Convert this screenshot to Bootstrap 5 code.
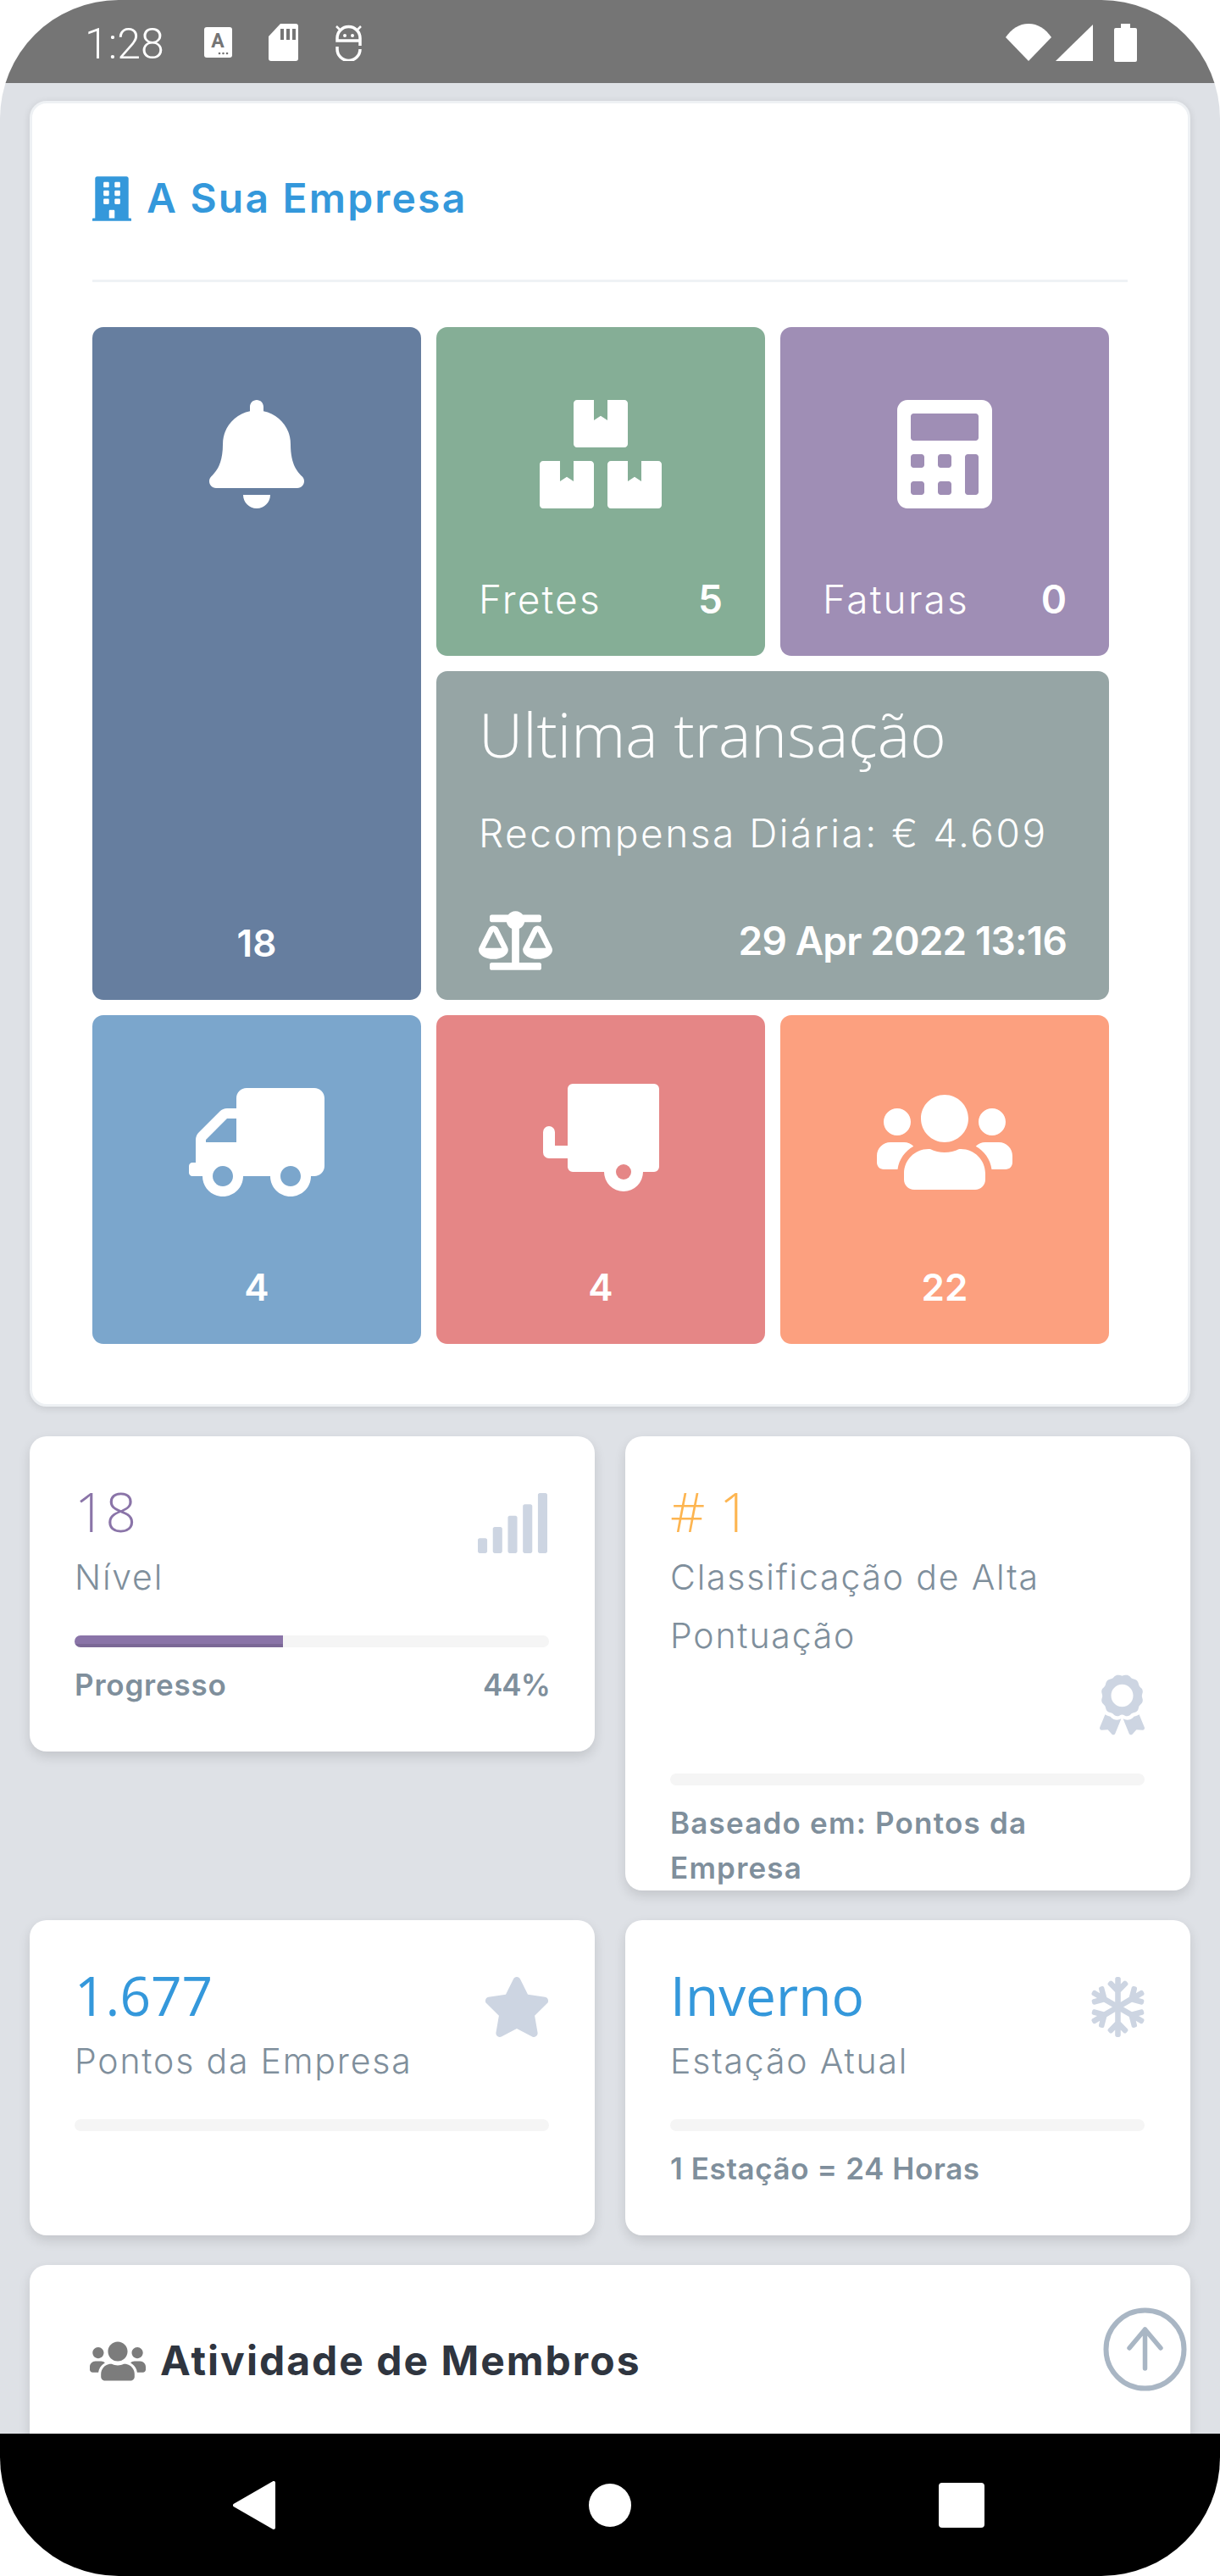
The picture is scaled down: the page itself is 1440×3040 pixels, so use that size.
<!DOCTYPE html>
<html lang="pt">
<head>
<meta charset="utf-8">
<title>A Sua Empresa</title>
<link href="https://cdn.jsdelivr.net/npm/bootstrap@5.3.0/dist/css/bootstrap.min.css" rel="stylesheet">
<style>
body{background:#fff;font-family:"Inter","Liberation Sans",sans-serif;margin:0}
.phone{width:1440px;height:3040px;border-radius:140px;overflow:hidden}
.statusbar{height:98px;background:#757575;color:#fff;padding:2px 98px 0 100px;flex:none}
.clock{font:300 50px/1 "Roboto",sans-serif;margin-right:47px;margin-top:3px}
.st-a{width:33px;height:36px;margin-right:43px}
.st-sd{width:35px;height:44px;margin-right:44px}
.st-bot{width:31px;height:44px}
.st-wifi{width:54px;height:44px;margin-right:5px}
.st-sig{width:44px;height:44px;margin-right:25px}
.st-bat{width:27px;height:45px}
.screen{flex:1;background:#dee1e6;padding:21px 35px 0;overflow:hidden;min-height:0}
.navbar-bottom{height:168px;background:#000;flex:none;padding-left:275px}
.nav-back{width:50px;height:57px;margin-right:370px}
.nav-home{width:50px;height:51px;margin-right:363px}
.nav-recent{width:54px;height:53px}
.main-card{border:3px solid #eef1f4;border-radius:20px;background:#fff;padding:85px 71px 71px;margin-bottom:35px;box-shadow:0 2px 10px rgba(0,0,0,.11)}
.main-title{height:54px;margin-bottom:69px;color:#3498db;font-size:48px;font-weight:600;letter-spacing:2.2px;gap:18px}
.main-title svg{width:46px;height:53px;fill:#3498db}
.title-rule{height:3px;background:#eff2f5;margin-bottom:53px}
.tiles{display:grid;grid-template-columns:repeat(3,388px);grid-auto-rows:388px;gap:18px 18px;width:1200px}
.tile{border-radius:13px;color:#fff;display:flex;flex-direction:column;padding:0 50px 37px}
.tile-tall{grid-row:span 2}
.tile-wide{grid-column:span 2;padding-top:29px;padding-bottom:35px}
.bg-slate{background:#667e9f}.bg-sage{background:#85ae96}.bg-lilac{background:#9f8eb5}.bg-ash{background:#96a5a5}.bg-sky{background:#7ba6cc}.bg-rose{background:#e58686}.bg-peach{background:#fca07f}
.tile-icon{height:128px;margin-top:86px;fill:#fff;align-self:center;display:block}
.tile-icon-raised{margin-top:81px}
.tile-foot{margin-top:auto;line-height:60px;font-size:46px;font-weight:300;letter-spacing:2.2px}
.tile-foot b{font-weight:600;letter-spacing:0}
.tile-count{margin-top:auto;line-height:60px;font-size:44px;font-weight:600;text-align:center}
.last-head{font:300 72.5px/90px "Open Sans",sans-serif}
.last-sub{font-size:46px;font-weight:300;line-height:60px;margin-top:42px;letter-spacing:2.5px;white-space:nowrap}
.last-foot{margin-top:auto}
.last-foot svg{width:87px;height:70px;fill:#fff}
.last-foot span{font-size:46px;font-weight:600;letter-spacing:-.85px}
.stat-row{--bs-gutter-x:36px;--bs-gutter-y:0;margin-bottom:35px}
.stat-card{background:#fff;border-radius:20px;padding:51px 54px 0 53px;height:372px;box-shadow:0 6px 14px rgba(0,0,0,.12);overflow:hidden}
.stat-tall{height:536px}
.stat-head{margin-bottom:34px}
.stat-num{font:300 64px/76px "Open Sans",sans-serif}
.stat-label{font-size:41px;font-weight:300;line-height:69px;color:#7f8f9c;margin-top:5px;letter-spacing:1.8px}
.c-purple{color:#8a74a8}.c-amber{color:#fdb551}.c-blue{color:#3498db;font-weight:400}
.stat-ico{fill:#cdd5e2;margin-left:auto;margin-top:16px;display:block}
.ico-sig{width:82px;height:71px;margin-right:2px}
.ico-star{width:80px;height:71px;margin-right:-2px}
.ico-snow{width:63px;height:71px}
.ico-award{width:53px;height:72px;margin-top:11px;margin-bottom:11px}
.stat-track{--bs-progress-height:14px;--bs-progress-bg:#f5f5f5;--bs-progress-border-radius:7px;--bs-progress-bar-bg:#8a74a8}
.stat-fill{box-shadow:inset 0 -4px 0 rgba(0,0,0,.1)}
.stat-foot{font-size:35px;font-weight:600;line-height:53px;color:#7f8f9c;margin-top:18px;letter-spacing:.8px}
.stat-foot .foot-end{letter-spacing:-.9px;margin-right:-1px}
.foot-long{letter-spacing:1.2px}
.foot-short{letter-spacing:.6px}
.member-card{background:#fff;border-radius:20px;height:400px;padding:77px 70px 0 71px;box-shadow:0 6px 14px rgba(0,0,0,.12)}
.member-title{gap:17px;font-size:48px;font-weight:700;color:#2f353f;letter-spacing:2px}
.member-title svg{width:66px;height:53px;fill:#7c7c7c}
.up-btn{right:39px;bottom:218px;width:99px;height:99px}
</style>
</head>
<body>
<div class="phone d-flex flex-column position-relative">

  <div class="statusbar d-flex align-items-center">
    <span class="clock">1:28</span>
    <svg class="st-a" viewBox="0 0 33 36"><rect width="33" height="36" rx="3" fill="#fff"/><text x="16" y="24" text-anchor="middle" font-family="Roboto,sans-serif" font-weight="700" font-size="23" fill="#757575">A</text><circle cx="18" cy="31" r="1.3" fill="#757575"/><circle cx="22.500" cy="31" r="1.3" fill="#757575"/><circle cx="27" cy="31" r="1.3" fill="#757575"/></svg>
    <svg class="st-sd" viewBox="0 0 35 44"><path fill="#fff" d="M14 0h18a3 3 0 0 1 3 3v38a3 3 0 0 1-3 3H3a3 3 0 0 1-3-3V15z"/><path fill="#757575" d="M14 6h4v13h-4zM21 6h4v13h-4zM28 6h4v13h-4z"/></svg>
    <svg class="st-bot" viewBox="0 0 31 44" fill="none" stroke="#fff" stroke-width="3.500"><path d="M29 26V17a13.500 13.500 0 0 0-27 0v3h27M2 27v3a13.500 13.500 0 0 0 27 0"/><path d="M1 3l5 5M30 3l-5 5" stroke-width="2.500"/><circle cx="11" cy="14" r="2" fill="#fff" stroke="none"/><circle cx="20" cy="14" r="2" fill="#fff" stroke="none"/></svg>
    <div class="ms-auto d-flex align-items-center">
      <svg class="st-wifi" viewBox="0 0 54 44"><path fill="#fff" d="M0 16C7 6 16 0 27 0s20 6 27 16L27 44z"/></svg>
      <svg class="st-sig" viewBox="0 0 44 44"><path fill="#fff" d="M44 1v43H0z"/></svg>
      <svg class="st-bat" viewBox="0 0 27 45"><path fill="#fff" d="M8 0h11v5h6a2 2 0 0 1 2 2v36a2 2 0 0 1-2 2H2a2 2 0 0 1-2-2V7a2 2 0 0 1 2-2h6z"/></svg>
    </div>
  </div>

  <div class="screen">
    <section class="main-card">
      <div class="main-title d-flex align-items-center">
        <svg viewBox="0 0 448 512"><path d="M436 480h-20V24c0-13.255-10.745-24-24-24H56C42.745 0 32 10.745 32 24v456H12c-6.627 0-12 5.373-12 12v20h448v-20c0-6.627-5.373-12-12-12zM128 76c0-6.627 5.373-12 12-12h40c6.627 0 12 5.373 12 12v40c0 6.627-5.373 12-12 12h-40c-6.627 0-12-5.373-12-12V76zm0 96c0-6.627 5.373-12 12-12h40c6.627 0 12 5.373 12 12v40c0 6.627-5.373 12-12 12h-40c-6.627 0-12-5.373-12-12v-40zm52 148h-40c-6.627 0-12-5.373-12-12v-40c0-6.627 5.373-12 12-12h40c6.627 0 12 5.373 12 12v40c0 6.627-5.373 12-12 12zm76 160h-64v-84c0-6.627 5.373-12 12-12h40c6.627 0 12 5.373 12 12v84zm64-172c0 6.627-5.373 12-12 12h-40c-6.627 0-12-5.373-12-12v-40c0-6.627 5.373-12 12-12h40c6.627 0 12 5.373 12 12v40zm0-96c0 6.627-5.373 12-12 12h-40c-6.627 0-12-5.373-12-12v-40c0-6.627 5.373-12 12-12h40c6.627 0 12 5.373 12 12v40zm0-96c0 6.627-5.373 12-12 12h-40c-6.627 0-12-5.373-12-12V76c0-6.627 5.373-12 12-12h40c6.627 0 12 5.373 12 12v40z"/></svg>
        <span>A Sua Empresa</span>
      </div>
      <div class="title-rule"></div>
      <div class="tiles">
        <div class="tile tile-tall bg-slate">
          <svg class="tile-icon" viewBox="0 0 448 512"><path d="M224 512c35.32 0 63.97-28.65 63.97-64H160.03c0 35.35 28.65 64 63.97 64zm215.39-149.71c-19.32-20.76-55.47-51.99-55.47-154.29 0-77.7-54.48-139.9-127.94-155.16V32c0-17.67-14.32-32-31.98-32s-31.98 14.33-31.98 32v20.84C118.56 68.1 64.08 130.3 64.08 208c0 102.3-36.15 133.53-55.47 154.29-6 6.45-8.66 14.16-8.61 21.71.11 16.4 12.98 32 32.1 32h383.8c19.12 0 32-15.6 32.1-32 .05-7.55-2.61-15.27-8.61-21.71z"/></svg>
          <div class="tile-count">18</div>
        </div>
        <div class="tile bg-sage">
          <svg class="tile-icon" viewBox="0 0 576 512"><path d="M560 288h-80v96l-32-21.3-32 21.3v-96h-80c-8.8 0-16 7.2-16 16v192c0 8.8 7.2 16 16 16h224c8.8 0 16-7.2 16-16V304c0-8.8-7.2-16-16-16zm-384-64h224c8.8 0 16-7.2 16-16V16c0-8.8-7.2-16-16-16h-80v96l-32-21.3L256 96V0h-80c-8.8 0-16 7.2-16 16v192c0 8.8 7.2 16 16 16zm64 64h-80v96l-32-21.3L96 384v-96H16c-8.8 0-16 7.2-16 16v192c0 8.8 7.2 16 16 16h224c8.8 0 16-7.2 16-16V304c0-8.8-7.2-16-16-16z"/></svg>
          <div class="tile-foot d-flex justify-content-between"><span>Fretes</span><b>5</b></div>
        </div>
        <div class="tile bg-lilac">
          <svg class="tile-icon" viewBox="0 0 448 512"><path d="M400 0H48C22.4 0 0 22.4 0 48v416c0 25.6 22.4 48 48 48h352c25.6 0 48-22.4 48-48V48c0-25.6-22.4-48-48-48zM128 435.2c0 6.4-6.4 12.8-12.8 12.8H76.8c-6.4 0-12.8-6.4-12.8-12.8v-38.4c0-6.4 6.4-12.8 12.8-12.8h38.4c6.4 0 12.8 6.4 12.8 12.8v38.4zm0-128c0 6.4-6.4 12.8-12.8 12.8H76.8c-6.4 0-12.8-6.4-12.8-12.8v-38.4c0-6.4 6.4-12.8 12.8-12.8h38.4c6.4 0 12.8 6.4 12.8 12.8v38.4zm128 128c0 6.4-6.4 12.8-12.8 12.8h-38.4c-6.4 0-12.8-6.4-12.8-12.8v-38.4c0-6.4 6.4-12.8 12.8-12.8h38.4c6.4 0 12.8 6.4 12.8 12.8v38.4zm0-128c0 6.4-6.4 12.8-12.8 12.8h-38.4c-6.4 0-12.8-6.4-12.8-12.8v-38.4c0-6.4 6.4-12.8 12.8-12.8h38.4c6.4 0 12.8 6.4 12.8 12.8v38.4zm128 128c0 6.4-6.4 12.8-12.8 12.8h-38.4c-6.4 0-12.8-6.4-12.8-12.8V268.8c0-6.4 6.4-12.8 12.8-12.8h38.4c6.4 0 12.8 6.4 12.8 12.8v166.4zm0-256c0 6.4-6.4 12.8-12.8 12.8H76.8c-6.4 0-12.8-6.4-12.8-12.8V76.8C64 70.4 70.4 64 76.8 64h294.4c6.4 0 12.8 6.4 12.8 12.8v102.4z"/></svg>
          <div class="tile-foot d-flex justify-content-between"><span>Faturas</span><b>0</b></div>
        </div>
        <div class="tile tile-wide bg-ash">
          <div class="last-head">Ultima transação</div>
          <div class="last-sub">Recompensa Diária: € 4.609</div>
          <div class="last-foot d-flex justify-content-between align-items-center">
            <svg viewBox="0 0 640 512"><path d="M256 336h-.02c0-16.18 1.34-8.73-85.05-181.51-17.65-35.29-68.19-35.36-85.87 0C-2.06 328.75.02 320.33.02 336H0c0 44.18 57.31 80 128 80s128-35.82 128-80zM128 176l72 144H56l72-144zm511.98 160c0-16.18 1.34-8.73-85.05-181.51-17.65-35.29-68.19-35.36-85.87 0-87.12 174.26-85.04 165.84-85.04 181.51H384c0 44.18 57.31 80 128 80s128-35.82 128-80h-.02zM440 320l72-144 72 144H440zm88 128H352V153.25c23.51-10.29 41.16-31.48 46.39-57.25H528c8.84 0 16-7.16 16-16V48c0-8.84-7.16-16-16-16H383.64C369.04 12.68 346.09 0 320 0s-49.04 12.68-63.64 32H112c-8.84 0-16 7.16-16 16v32c0 8.84 7.16 16 16 16h129.61c5.23 25.76 22.87 46.96 46.39 57.25V448H112c-8.84 0-16 7.16-16 16v32c0 8.84 7.16 16 16 16h416c8.84 0 16-7.16 16-16v-32c0-8.84-7.16-16-16-16z"/></svg>
            <span>29 Apr 2022 13:16</span>
          </div>
        </div>
        <div class="tile bg-sky">
          <svg class="tile-icon" viewBox="0 0 640 512"><path transform="matrix(-1 0 0 1 640 0)" d="M624 352h-16V243.9c0-12.7-5.1-24.9-14.1-33.9L494 110.1c-9-9-21.2-14.1-33.900-14.1H416V48c0-26.500-21.500-48-48-48H48C21.500 0 0 21.500 0 48v320c0 26.500 21.500 48 48 48h16c0 53 43 96 96 96s96-43 96-96h128c0 53 43 96 96 96s96-43 96-96h48c8.800 0 16-7.200 16-16v-32c0-8.800-7.200-16-16-16zM160 464c-26.500 0-48-21.500-48-48s21.500-48 48-48 48 21.500 48 48-21.500 48-48 48zm320 0c-26.500 0-48-21.500-48-48s21.500-48 48-48 48 21.500 48 48-21.500 48-48 48zm80-208H416V144h44.100l99.900 99.900V256z"/></svg>
          <div class="tile-count">4</div>
        </div>
        <div class="tile bg-rose">
          <svg class="tile-icon tile-icon-raised" viewBox="0 0 137 128"><path d="M35 0h96a6 6 0 0 1 6 6v92a6 6 0 0 1-6 6h-13a23 23 0 0 1-46 0H35a6 6 0 0 1-6-6V88H7a7 7 0 0 1-7-7V57a7 7 0 0 1 14 0v16h15V6a6 6 0 0 1 6-6z"/><circle cx="95" cy="104" r="9" fill="#e58686"/></svg>
          <div class="tile-count">4</div>
        </div>
        <div class="tile bg-peach">
          <svg class="tile-icon" viewBox="0 0 640 512"><path d="M96 224c35.300 0 64-28.700 64-64s-28.700-64-64-64-64 28.700-64 64 28.700 64 64 64zm448 0c35.300 0 64-28.700 64-64s-28.700-64-64-64-64 28.700-64 64 28.700 64 64 64zm32 32h-64c-17.600 0-33.500 7.100-45.100 18.600 40.300 22.100 68.900 62 75.100 109.400h66c17.700 0 32-14.300 32-32v-32c0-35.300-28.700-64-64-64zm-256 0c61.900 0 112-50.100 112-112S381.900 32 320 32 208 82.100 208 144s50.100 112 112 112zm76.800 32h-8.300c-20.800 10-43.900 16-68.500 16s-47.600-6-68.500-16h-8.300C179.600 288 128 339.600 128 403.200V432c0 26.500 21.500 48 48 48h288c26.500 0 48-21.500 48-48v-28.800c0-63.600-51.600-115.200-115.200-115.200zm-223.700-13.400C161.500 263.100 145.600 256 128 256H64c-35.300 0-64 28.700-64 64v32c0 17.700 14.300 32 32 32h65.900c6.300-47.400 34.900-87.300 75.200-109.400z"/></svg>
          <div class="tile-count">22</div>
        </div>
      </div>
    </section>

    <div class="row stat-row align-items-start">
      <div class="col-6">
        <div class="stat-card">
          <div class="stat-head d-flex flex-wrap">
            <div>
              <div class="stat-num c-purple">18</div>
              <div class="stat-label">Nível</div>
            </div>
            <svg class="stat-ico ico-sig" viewBox="24 0 592 512"><path d="M216 288h-48c-8.840 0-16 7.160-16 16v192c0 8.840 7.160 16 16 16h48c8.840 0 16-7.160 16-16V304c0-8.840-7.160-16-16-16zM88 384H40c-8.840 0-16 7.160-16 16v96c0 8.840 7.160 16 16 16h48c8.840 0 16-7.160 16-16v-96c0-8.840-7.160-16-16-16zm256-192h-48c-8.840 0-16 7.160-16 16v288c0 8.840 7.160 16 16 16h48c8.840 0 16-7.160 16-16V208c0-8.840-7.160-16-16-16zm128-96h-48c-8.840 0-16 7.160-16 16v384c0 8.840 7.160 16 16 16h48c8.840 0 16-7.160 16-16V112c0-8.840-7.160-16-16-16zM600 0h-48c-8.840 0-16 7.160-16 16v480c0 8.840 7.160 16 16 16h48c8.840 0 16-7.160 16-16V16c0-8.840-7.160-16-16-16z"/></svg>
          </div>
          <div class="progress stat-track"><div class="progress-bar stat-fill" style="width:44%"></div></div>
          <div class="stat-foot d-flex justify-content-between"><span>Progresso</span><span class="foot-end">44%</span></div>
        </div>
      </div>
      <div class="col-6">
        <div class="stat-card stat-tall">
          <div class="stat-head d-flex flex-wrap">
            <div>
              <div class="stat-num c-amber"># 1</div>
              <div class="stat-label">Classificação de Alta Pontuação</div>
            </div>
            <svg class="stat-ico ico-award" viewBox="0 0 384 512"><path d="M97.120 362.630c-8.690-8.690-4.160-6.240-25.120-11.850-9.510-2.550-17.870-7.450-25.430-13.320L1.200 448.700c-4.390 10.770 3.810 22.470 15.430 22.030l52.690-2.010L105.560 507c8 8.440 22.040 5.810 26.430-4.960l52.050-127.620c-10.840 6.040-22.870 9.580-35.310 9.580-19.500 0-37.820-7.590-51.610-21.370zM382.800 448.700l-45.370-111.240c-7.560 5.880-15.920 10.770-25.430 13.320-21.070 5.640-16.450 3.180-25.120 11.850-13.790 13.780-32.120 21.370-51.620 21.370-12.440 0-24.470-3.550-35.310-9.580L252 502.040c4.390 10.770 18.440 13.400 26.430 4.960l36.250-38.280 52.690 2.010c11.620.44 19.820-11.270 15.430-22.030zM263 340c15.280-15.550 17.030-14.210 38.790-20.140 13.890-3.790 24.750-14.840 28.470-28.980 7.480-28.400 5.540-24.970 25.950-45.750 10.170-10.350 14.140-25.440 10.420-39.580-7.470-28.380-7.480-24.420 0-52.830 3.720-14.140-.25-29.230-10.420-39.580-20.410-20.780-18.470-17.360-25.950-45.750-3.720-14.140-14.580-25.190-28.470-28.980-27.880-7.610-24.520-5.620-44.950-26.410-10.170-10.350-25-14.400-38.890-10.610-27.870 7.600-23.980 7.610-51.900 0-13.890-3.790-28.720.25-38.890 10.610-20.410 20.780-17.050 18.800-44.940 26.410-13.890 3.790-24.750 14.840-28.470 28.980-7.470 28.390-5.540 24.970-25.950 45.750-10.170 10.350-14.150 25.440-10.420 39.580 7.470 28.360 7.480 24.400 0 52.820-3.720 14.140.25 29.230 10.420 39.590 20.410 20.780 18.470 17.350 25.950 45.750 3.720 14.140 14.580 25.190 28.470 28.980C104.600 325.960 106.270 325 121 340c13.230 13.470 33.840 15.880 49.740 5.820a39.676 39.676 0 0 1 42.530 0c15.890 10.060 36.500 7.650 49.730-5.820zM97.660 175.960c0-53.030 42.240-96.020 94.340-96.020s94.340 42.990 94.340 96.020-42.240 96.020-94.340 96.020-94.340-42.990-94.340-96.020z"/></svg>
          </div>
          <div class="progress stat-track"><div class="progress-bar stat-fill" style="width:0%"></div></div>
          <div class="stat-foot foot-long">Baseado em: Pontos da<br>Empresa</div>
        </div>
      </div>
    </div>

    <div class="row stat-row align-items-start">
      <div class="col-6">
        <div class="stat-card">
          <div class="stat-head d-flex flex-wrap">
            <div>
              <div class="stat-num c-blue">1.677</div>
              <div class="stat-label">Pontos da Empresa</div>
            </div>
            <svg class="stat-ico ico-star" viewBox="0 0 576 512"><path d="M259.300 17.800L194 150.200 47.900 171.500c-26.200 3.800-36.700 36.100-17.700 54.600l105.700 103-25 145.500c-4.500 26.300 23.200 46 46.400 33.700L288 439.600l130.700 68.700c23.200 12.200 50.900-7.400 46.400-33.700l-25-145.500 105.700-103c19-18.500 8.500-50.800-17.700-54.600L382 150.200 316.700 17.800c-11.700-23.600-45.600-24.100-57.400 0z"/></svg>
          </div>
          <div class="progress stat-track"><div class="progress-bar stat-fill" style="width:0%"></div></div>
        </div>
      </div>
      <div class="col-6">
        <div class="stat-card">
          <div class="stat-head d-flex flex-wrap">
            <div>
              <div class="stat-num c-blue">Inverno</div>
              <div class="stat-label">Estação Atual</div>
            </div>
            <svg class="stat-ico ico-snow" viewBox="0 0 448 512"><path d="M440.100 355.200l-39.200-23 34.100-9.300c8.400-2.300 13.400-11.100 11.100-19.600l-4.100-15.500c-2.200-8.500-10.900-13.600-19.300-11.300L343 298.200 271.200 256l71.900-42.200 79.700 21.700c8.400 2.300 17-2.800 19.300-11.300l4.100-15.500c2.200-8.500-2.700-17.300-11.100-19.600l-34.100-9.300 39.200-23c7.500-4.400 10.100-14.200 5.800-21.900l-7.900-13.900c-4.300-7.700-14-10.300-21.500-5.900l-39.200 23 9.100-34.700c2.200-8.500-2.700-17.300-11.100-19.600l-15.200-4.100c-8.400-2.300-17 2.800-19.300 11.300l-21.300 81-71.900 42.200v-84.500L306 70.400c6.100-6.200 6.100-16.400 0-22.600l-11.100-11.300c-6.100-6.200-16.100-6.200-22.200 0l-24.900 25.400V16c0-8.800-7-16-15.700-16h-15.700c-8.700 0-15.700 7.200-15.700 16v46.100l-24.900-25.400c-6.100-6.200-16.100-6.200-22.200 0L142.100 48c-6.100 6.200-6.100 16.400 0 22.600l58.300 59.300v84.500l-71.900-42.200-21.300-81c-2.200-8.500-10.900-13.600-19.300-11.300L72.700 84c-8.400 2.300-13.400 11.100-11.100 19.600l9.100 34.700-39.200-23c-7.500-4.400-17.100-1.800-21.500 5.900l-7.900 13.900c-4.300 7.700-1.800 17.500 5.800 21.900l39.200 23-34.100 9.100c-8.400 2.300-13.400 11.100-11.100 19.600L6 224.200c2.200 8.500 10.900 13.600 19.300 11.300l79.700-21.700 71.900 42.200-71.900 42.200-79.700-21.700c-8.400-2.300-17 2.800-19.300 11.300l-4.100 15.500c-2.200 8.500 2.700 17.300 11.100 19.600l34.100 9.300-39.200 23c-7.500 4.400-10.100 14.200-5.800 21.900L10 391c4.300 7.700 14 10.300 21.500 5.900l39.200-23-9.100 34.700c-2.200 8.500 2.700 17.300 11.100 19.600l15.200 4.100c8.400 2.300 17-2.800 19.300-11.300l21.300-81 71.900-42.200v84.500l-58.300 59.300c-6.100 6.200-6.100 16.400 0 22.600l11.100 11.300c6.100 6.200 16.100 6.200 22.200 0l24.900-25.400V496c0 8.800 7 16 15.700 16h15.700c8.700 0 15.700-7.200 15.700-16v-46.100l24.900 25.400c6.100 6.200 16.100 6.200 22.200 0l11.100-11.300c6.100-6.200 6.100-16.400 0-22.600l-58.300-59.300v-84.500l71.900 42.200 21.300 81c2.200 8.500 10.900 13.600 19.300 11.300L375 428c8.400-2.300 13.400-11.100 11.100-19.600l-9.100-34.700 39.200 23c7.500 4.400 17.100 1.800 21.500-5.900l7.900-13.900c4.600-7.500 2.100-17.300-5.500-21.700z"/></svg>
          </div>
          <div class="progress stat-track"><div class="progress-bar stat-fill" style="width:0%"></div></div>
          <div class="stat-foot foot-short">1 Estação = 24 Horas</div>
        </div>
      </div>
    </div>

    <section class="member-card">
      <div class="member-title d-flex align-items-center">
        <svg viewBox="0 0 640 512"><path d="M96 224c35.300 0 64-28.700 64-64s-28.700-64-64-64-64 28.700-64 64 28.700 64 64 64zm448 0c35.300 0 64-28.700 64-64s-28.700-64-64-64-64 28.700-64 64 28.700 64 64 64zm32 32h-64c-17.600 0-33.500 7.100-45.100 18.600 40.300 22.100 68.900 62 75.100 109.400h66c17.700 0 32-14.300 32-32v-32c0-35.300-28.700-64-64-64zm-256 0c61.900 0 112-50.100 112-112S381.900 32 320 32 208 82.100 208 144s50.100 112 112 112zm76.800 32h-8.300c-20.800 10-43.900 16-68.500 16s-47.600-6-68.500-16h-8.300C179.600 288 128 339.600 128 403.200V432c0 26.500 21.500 48 48 48h288c26.500 0 48-21.500 48-48v-28.800c0-63.600-51.600-115.200-115.200-115.200zm-223.700-13.400C161.500 263.100 145.600 256 128 256H64c-35.300 0-64 28.700-64 64v32c0 17.700 14.300 32 32 32h65.900c6.300-47.400 34.900-87.300 75.200-109.400z"/></svg>
        <span>Atividade de Membros</span>
      </div>
    </section>
  </div>

  <div class="navbar-bottom d-flex align-items-center">
    <svg class="nav-back" viewBox="0 0 50 57"><path fill="#fff" stroke="#fff" stroke-width="4" stroke-linejoin="round" d="M2 28.500L48 2v53z"/></svg>
    <svg class="nav-home" viewBox="0 0 50 51"><ellipse cx="25" cy="25.500" rx="25" ry="25.500" fill="#fff"/></svg>
    <svg class="nav-recent" viewBox="0 0 54 53"><rect width="54" height="53" rx="4" fill="#fff"/></svg>
  </div>

  <svg class="up-btn position-absolute" viewBox="0 0 99 99" fill="none" stroke="#a9b6c4" stroke-width="6" stroke-linecap="round" stroke-linejoin="round"><circle cx="49.500" cy="49.500" r="46"/><path d="M49.500 26v46M31 48l18.500-22L68 48" stroke-width="5.500"/></svg>
</div>
</body>
</html>
